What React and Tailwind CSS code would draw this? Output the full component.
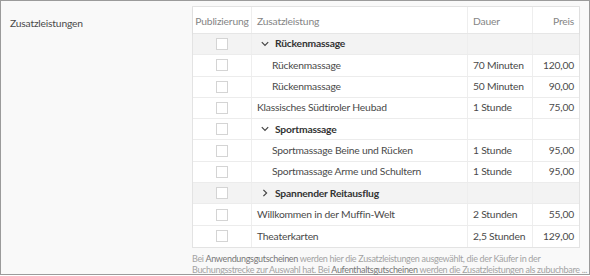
import React from "react";

const rows = [
  { type: "group", name: "Rückenmassage", open: true },
  { type: "child", name: "Rückenmassage", dauer: "70 Minuten", preis: "120,00" },
  { type: "child", name: "Rückenmassage", dauer: "50 Minuten", preis: "90,00" },
  { type: "item", name: "Klassisches Südtiroler Heubad", dauer: "1 Stunde", preis: "75,00" },
  { type: "group", name: "Sportmassage", open: true, white: true },
  { type: "child", name: "Sportmassage Beine und Rücken", dauer: "1 Stunde", preis: "95,00" },
  { type: "child", name: "Sportmassage Arme und Schultern", dauer: "1 Stunde", preis: "95,00" },
  { type: "group", name: "Spannender Reitausflug", open: false },
  { type: "item", name: "Willkommen in der Muffin-Welt", dauer: "2 Stunden", preis: "55,00" },
  { type: "item", name: "Theaterkarten", dauer: "2,5 Stunden", preis: "129,00" },
];

function Chevron({ open }) {
  return (
    <svg width="8" height="8" viewBox="0 0 8 8" className="shrink-0">
      {open ? (
        <path d="M0.8 2.2 L4 5.4 L7.2 2.2" fill="none" stroke="#444" strokeWidth="1.2" />
      ) : (
        <path d="M2.4 0.8 L5.6 4 L2.4 7.2" fill="none" stroke="#444" strokeWidth="1.2" />
      )}
    </svg>
  );
}

export default function App() {
  return (
    <div
      className="w-[590px] h-[275px] bg-[#f9f9f9] border border-[#9b9b9b] flex text-[10.3px] tracking-[-0.2px] text-[#4a4a4a]"
      style={{ fontFamily: "Lato, 'Noto Sans', sans-serif" }}
    >
      <div className="w-[191px] shrink-0 pl-[9px] pt-[15px] text-[#4a4a4a]">Zusatzleistungen</div>
      <div className="w-[388px] pt-[5px] flex flex-col">
        <div className="border border-[#e3e3e3] bg-white">
          <div className="grid grid-cols-[59px_216px_65px_46px] h-[27px] text-[#858585] border-b border-[#e6e6e6] shadow-[0_1px_2px_rgba(0,0,0,0.06)]">
            <div className="flex items-center justify-center pt-[4px] border-r border-[#eee]">Publizierung</div>
            <div className="flex items-center pt-[4px] pl-[5px] border-r border-[#eee]">Zusatzleistung</div>
            <div className="flex items-center pt-[4px] pl-[5px] border-r border-[#eee]">Dauer</div>
            <div className="flex items-center pt-[4px] justify-end pr-[5px]">Preis</div>
          </div>
          {rows.map((r, i) => {
            const grp = r.type === "group";
            const bg = grp && !r.white ? "bg-[#f3f3f3]" : "bg-white";
            return (
              <div
                key={i}
                className={`grid grid-cols-[59px_216px_65px_46px] h-[21.3px] ${bg} ${i < rows.length - 1 ? "border-b border-[#ececec]" : ""}`}
              >
                <div className="flex items-center justify-center border-r border-[#eee]">
                  <div className="w-[12px] h-[12px] bg-white border border-[#d4d4d4]" />
                </div>
                <div className="flex items-center pl-[5px] border-r border-[#eee] whitespace-nowrap">
                  {grp ? (
                    <div className="flex items-center gap-[6px] pl-[4px] font-bold text-[#333]">
                      <Chevron open={r.open} />
                      <span>{r.name}</span>
                    </div>
                  ) : r.type === "child" ? (
                    <span className="pl-[15px]">{r.name}</span>
                  ) : (
                    <span>{r.name}</span>
                  )}
                </div>
                <div className="flex items-center pl-[5px] border-r border-[#eee] whitespace-nowrap">{r.dauer}</div>
                <div className="flex items-center justify-end pr-[5px]">{r.preis}</div>
              </div>
            );
          })}
        </div>
        <div className="text-[9px] tracking-[-0.32px] leading-[11px] text-[#a3a3a3] pt-[5px] whitespace-nowrap">
          Bei <span className="text-[#777]">Anwendungsgutscheinen</span> werden hier die Zusatzleistungen ausgewählt, die der Käufer in der
          <br />
          Buchungsstrecke zur Auswahl hat. Bei <span className="text-[#777]">Aufenthaltsgutscheinen</span> werden die Zusatzleistungen als zubuchbare ...
        </div>
      </div>
    </div>
  );
}
